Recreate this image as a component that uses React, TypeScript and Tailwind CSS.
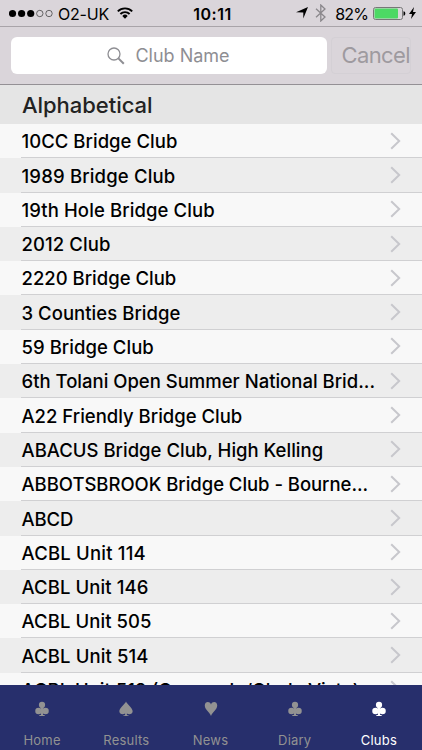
type Suit = 'club' | 'spade' | 'heart'

const clubs = [
    { name: '10CC Bridge Club', tracking: 'tracking-[0.03px]' },
    { name: '1989 Bridge Club', tracking: 'tracking-[0.17px]' },
    { name: '19th Hole Bridge Club', tracking: 'tracking-[0.1px]' },
    { name: '2012 Club', tracking: 'tracking-[0.1px]' },
    { name: '2220 Bridge Club', tracking: 'tracking-[0px]' },
    { name: '3 Counties Bridge', tracking: 'tracking-[0.04px]' },
    { name: '59 Bridge Club', tracking: 'tracking-[0.04px]' },
    { name: '6th Tolani Open Summer National Brid...', tracking: 'tracking-[0px]' },
    { name: 'A22 Friendly Bridge Club', tracking: 'tracking-[0px]' },
    { name: 'ABACUS Bridge Club, High Kelling', tracking: 'tracking-[0.01px]' },
    { name: 'ABBOTSBROOK Bridge Club - Bourne...', tracking: 'tracking-[-0.04px]' },
    { name: 'ABCD', tracking: 'tracking-[-0.1px]' },
    { name: 'ACBL Unit 114', tracking: 'tracking-[0.2px]' },
    { name: 'ACBL Unit 146', tracking: 'tracking-[0.1px]' },
    { name: 'ACBL Unit 505', tracking: 'tracking-[0.08px]' },
    { name: 'ACBL Unit 514', tracking: 'tracking-[0.12px]' },
    { name: 'ACBL Unit 519 (Coronado/Chula Vista)', tracking: 'tracking-[0px]' },
]

const tabs: { label: string; suit: Suit; active?: boolean }[] = [
    { label: 'Home', suit: 'club' },
    { label: 'Results', suit: 'spade' },
    { label: 'News', suit: 'heart' },
    { label: 'Diary', suit: 'club' },
    { label: 'Clubs', suit: 'club', active: true },
]

function SuitIcon({ suit }: { suit: Suit }) {
    return (
        <svg viewBox="0 0 16 18" className="h-[18px] w-4" fill="currentColor">
            {suit === 'club' && (
                <>
                    <circle cx="8" cy="4.4" r="3.5" />
                    <circle cx="4.1" cy="11.2" r="3.7" />
                    <circle cx="11.9" cy="11.2" r="3.7" />
                    <path d="M6.800 7h2.400v8.800h1.800V17H5v-1.200h1.800z" />
                </>
            )}
            {suit === 'spade' && (
                <path d="M8 .5C9.500 4 15.500 7.500 15.500 11.400c0 3.600-4.200 4.200-6.500 2.600v1.900h1.800V17H5.200v-1.100H7V14c-2.300 1.600-6.500 1-6.500-2.600C.5 7.500 6.500 4 8 .5z" />
            )}
            {suit === 'heart' && (
                <path d="M8 17C7 13 1 9.800 1 5 1 .300 6.600-.200 8 3.800 9.400-.200 15 .300 15 5c0 4.800-6 8-7 12z" />
            )}
        </svg>
    )
}

function StatusBar() {
    return (
        <div className="flex h-[27px] shrink-0 items-center justify-between border-b border-[#a9a4a9] pr-1.5 pl-[9px] text-black">
            <div className="flex w-[180px] items-center">
                <svg viewBox="0 0 45 9" className="h-[9px] w-[45px]">
                    <circle cx="3.500" cy="4.500" r="3.600" />
                    <circle cx="12.600" cy="4.500" r="3.600" />
                    <circle cx="21.700" cy="4.500" r="3.600" />
                    <circle cx="30.800" cy="4.500" r="3.200" fill="none" stroke="#333" strokeWidth=".7" />
                    <circle cx="40" cy="4.500" r="3.200" fill="none" stroke="#333" strokeWidth=".7" />
                </svg>
                <span className="ml-1 pt-px text-[16px] tracking-[-0.2px]">O2-UK</span>
                <svg viewBox="0 0 16 12" className="ml-2 h-3 w-4" fill="none" stroke="#000" strokeWidth="1.900">
                    <path d="M.8 4.400a10.200 10.200 0 0 1 14.400 0M3.400 7a6.500 6.500 0 0 1 9.200 0" />
                    <path d="M5.300 8.900a3.800 3.800 0 0 1 5.400 0L8 11.700z" fill="#000" stroke="none" />
                </svg>
            </div>
            <span className="pt-px text-[16px] font-semibold tracking-[0.5px]">10:11</span>
            <div className="flex w-[180px] items-center justify-end">
                <svg viewBox="0 0 12 12" className="h-3 w-3">
                    <path d="M12 0 7.300 11.500V5.500L0 5.300z" />
                </svg>
                <svg viewBox="0 0 12 18" className="ml-[7px] h-[18px] w-3" fill="none" stroke="#8a878b" strokeWidth="1.300">
                    <path d="m1 4.700 9 8.300L5.800 17V1L10 5l-9 8.300" />
                </svg>
                <span className="ml-2 pt-px text-[16px] tracking-[-0.9px]">82%</span>
                <svg viewBox="0 0 33 13" className="ml-[5px] h-[13px] w-[33px]">
                    <rect x=".5" y=".5" width="29" height="12" rx="2" fill="none" stroke="#777" />
                    <rect x="1.500" y="1.500" width="23.500" height="10" rx="1" fill="#4cd964" />
                    <path d="M30.500 4.300c2.400.5 2.400 4 0 4.500z" />
                </svg>
                <svg viewBox="0 0 7 12" className="ml-[3px] h-3 w-[7px]">
                    <path d="M5 0 0 7h3L2 12l5-7H4z" />
                </svg>
            </div>
        </div>
    )
}

function SearchBar() {
    return (
        <div className="flex h-[58px] shrink-0 items-center border-b border-[#949095] pl-[11px]">
            <div className="flex h-[37px] w-[316px] items-center justify-center rounded-[6px] bg-white pr-px text-[#8e8e93]">
                <svg viewBox="0 0 18 18" className="mr-2.5 h-[18px] w-[18px]" fill="none" stroke="currentColor">
                    <circle cx="7" cy="7" r="6" strokeWidth="1.300" />
                    <path d="m11.400 11.400 5.400 5.400" strokeWidth="2" />
                </svg>
                <span className="text-[18px]">Club Name</span>
            </div>
            <div className="ml-1 flex h-[37px] w-[80px] items-center justify-end rounded-[4px] border border-[#d4d0d5] text-[22px] text-[#9e9a9f]">
                <span className="pb-px tracking-[-0.6px]">Cancel</span>
            </div>
        </div>
    )
}

export default function App() {
    return (
        <div className="flex h-[750px] w-[422px] flex-col overflow-hidden bg-[#dad5da] font-['Inter',sans-serif]">
            <StatusBar />
            <SearchBar />
            <h2 className="h-[39px] shrink-0 bg-[#e5e5e5] pl-[22px] text-[22px] leading-[40px] font-medium tracking-[-0.04px] text-[#222]">
                Alphabetical
            </h2>
            <ul className="min-h-0 flex-1 overflow-hidden bg-[#f8f8f8]">
                {clubs.map((club) => (
                    <li key={club.name} className="flex h-[34.300px] odd:bg-[#f8f8f8] even:bg-[#ededed]">
                        <div className="ml-[21px] flex flex-1 items-center justify-between border-b border-[#d0d0d2] pr-[21px] pl-[0.500px]">
                            <span className={`pt-[3px] text-[18.500px] font-medium whitespace-nowrap text-black ${club.tracking}`}>
                                {club.name}
                            </span>
                            <svg viewBox="0 0 11 18" className="h-[18px] w-[11px] shrink-0" fill="none" stroke="#c7c7cc" strokeWidth="2">
                                <path d="m1.200 1.200 8 7.800-8 7.800" />
                            </svg>
                        </div>
                    </li>
                ))}
            </ul>
            <nav className="flex h-[65px] shrink-0 bg-[#272f6c] pr-px">
                {tabs.map((tab) => (
                    <div
                        key={tab.label}
                        className={`flex flex-1 flex-col items-center pt-4 ${tab.active ? 'text-white' : 'text-[#929292]'}`}
                    >
                        <SuitIcon suit={tab.suit} />
                        <span className="mt-[13px] text-[13px] leading-[20px] tracking-[0.2px]">{tab.label}</span>
                    </div>
                ))}
            </nav>
        </div>
    )
}
